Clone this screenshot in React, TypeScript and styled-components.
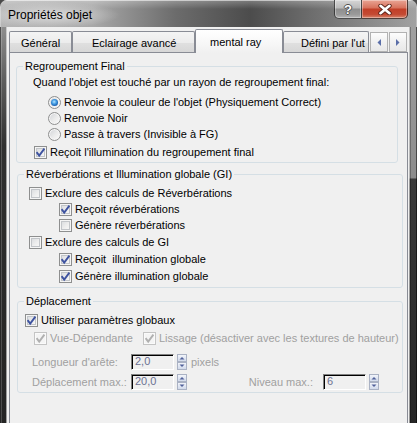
import React from 'react';
import styled, { createGlobalStyle } from 'styled-components';

const GlobalStyle = createGlobalStyle`
  html, body { margin: 0; padding: 0; background: #4a4a4a; }
  body { width: 417px; height: 423px; overflow: hidden; font-family: "Liberation Sans", Arial, sans-serif; }
`;

const Window = styled.div`
  width: 417px;
  height: 423px;
  display: flex;
  flex-direction: column;
  border-radius: 7px 7px 0 0;
  overflow: hidden;
  background: #3a3a3a;
  font-family: "Liberation Sans", Arial, sans-serif;
  font-size: 11px;
  color: #000;
`;

const TitleBar = styled.div`
  height: 27px;
  flex: none;
  display: flex;
  align-items: flex-start;
  padding: 0 9px 0 8px;
  background:
    radial-gradient(ellipse 70px 13px at 50px 15px, rgba(232, 232, 232, 0.8), rgba(232, 232, 232, 0) 100%),
    linear-gradient(180deg, rgba(255, 255, 255, 0.28) 0, rgba(255, 255, 255, 0) 9px),
    linear-gradient(90deg, #b6b6b6 0%, #a9a9a9 22%, #6c6c6c 42%, #4c4c4c 60%, #6e6e6e 75%, #a2a2a2 100%);
  box-shadow: inset 0 1px 0 rgba(255, 255, 255, 0.55), inset 1px 0 0 rgba(255, 255, 255, 0.3),
    inset -1px 0 0 rgba(255, 255, 255, 0.3);
`;

const Title = styled.div`
  margin-top: 7px;
  font-size: 12px;
  line-height: 16px;
  white-space: nowrap;
`;

const CaptionButtons = styled.div`
  display: flex;
  margin-left: auto;
`;

const CaptionButton = styled.div<{ $variant: 'help' | 'close' }>`
  box-sizing: border-box;
  width: ${(p) => (p.$variant === 'close' ? 46 : 28)}px;
  height: 19px;
  display: flex;
  align-items: center;
  justify-content: center;
  border: 1px solid rgba(30, 30, 30, 0.75);
  border-top: none;
  border-left-width: ${(p) => (p.$variant === 'close' ? 0 : 1)}px;
  border-radius: ${(p) => (p.$variant === 'close' ? '0 0 5px 0' : '0 0 0 5px')};
  background: ${(p) =>
    p.$variant === 'close'
      ? 'linear-gradient(180deg, #e9a595 0%, #d8745f 42%, #c23f28 52%, #c44a33 80%, #d7836a 100%)'
      : 'linear-gradient(180deg, #d6d6d6 0%, #bcbcbc 42%, #8f8f8f 52%, #9a9a9a 80%, #b4b4b4 100%)'};
  box-shadow: inset 0 0 0 1px rgba(255, 255, 255, 0.35);
`;

const HelpGlyph = styled.span`
  font-family: "Liberation Sans", Arial, sans-serif;
  font-weight: bold;
  font-size: 13px;
  line-height: 13px;
  color: #fff;
  text-shadow: -1px 0 #505050, 1px 0 #505050, 0 -1px #505050, 0 1px #505050;
`;

const Body = styled.div`
  flex: 1;
  display: flex;
  min-height: 0;
`;

const FrameSide = styled.div<{ $side: 'left' | 'right' }>`
  flex: none;
  width: ${(p) => (p.$side === 'left' ? 7 : 8)}px;
  background: ${(p) =>
    p.$side === 'left'
      ? 'linear-gradient(180deg, #8e8e8e 0%, #5c5c5c 14%, #303030 30%, #242424 100%)'
      : 'linear-gradient(180deg, #a0a0a0 0%, #8c8c8c 38%, #3a3a3a 38.5%, #262626 100%)'};
  box-shadow: ${(p) =>
    p.$side === 'left'
      ? 'inset 1px 0 0 rgba(0,0,0,0.5), inset 2px 0 0 rgba(255,255,255,0.18), inset -1px 0 0 rgba(255,255,255,0.55)'
      : 'inset -1px 0 0 rgba(0,0,0,0.5), inset 1px 0 0 rgba(255,255,255,0.55), inset 2px 0 0 rgba(0,0,0,0.25)'};
`;

const Client = styled.div`
  flex: 1;
  min-width: 0;
  display: flex;
  flex-direction: column;
  background: #f0f0f0;
  padding: 2px 1px 0 2px;
  overflow: hidden;
`;

const TabRow = styled.div`
  flex: none;
  height: 24px;
  display: flex;
  align-items: flex-end;
`;

const TabList = styled.div`
  flex: 1;
  min-width: 0;
  height: 24px;
  display: flex;
  align-items: flex-end;
  overflow: hidden;
`;

const Tab = styled.div<{ $width: number; $pad: number; $active?: boolean }>`
  flex: none;
  box-sizing: border-box;
  width: ${(p) => p.$width}px;
  height: ${(p) => (p.$active ? 24 : 22)}px;
  padding-left: ${(p) => p.$pad}px;
  display: flex;
  align-items: center;
  border: 1px solid #898c95;
  border-bottom: none;
  border-radius: 2px 2px 0 0;
  background: ${(p) =>
    p.$active
      ? 'linear-gradient(180deg, #ffffff 0%, #f7f7f7 60%, #f0f0f0 100%)'
      : 'linear-gradient(180deg, #f4f4f4 0%, #ececec 50%, #e0e0e0 51%, #d6d6d6 100%)'};
  position: ${(p) => (p.$active ? 'relative' : 'static')};
  z-index: ${(p) => (p.$active ? 2 : 'auto')};
  line-height: 14px;
  white-space: nowrap;
`;

const TabScroll = styled.div`
  flex: none;
  display: flex;
  gap: 1px;
  margin: 0 1px 1px 1px;
`;

const ScrollButton = styled.div`
  box-sizing: border-box;
  width: 18px;
  height: 20px;
  display: flex;
  align-items: center;
  justify-content: center;
  border: 1px solid #b2b2b2;
  background: linear-gradient(180deg, #fdfdfd 0%, #f1f1f1 50%, #e8e8e8 100%);
`;

const Panel = styled.div`
  position: relative;
  z-index: 1;
  flex: 1;
  margin: -1px 0 -4px 0;
  border: 1px solid #898c95;
  background: #f0f0f0;
  padding-top: 6px;
  display: flex;
  flex-direction: column;
`;

const Group = styled.fieldset<{ $ml: number; $mr: number; $mt: number; $pb: number }>`
  margin: ${(p) => `${p.$mt}px ${p.$mr}px 0 ${p.$ml}px`};
  padding: 0 0 ${(p) => p.$pb}px 0;
  border: 1px solid #d5dfe5;
  border-radius: 3px;
  min-width: 0;
`;

const Legend = styled.legend`
  margin-left: 6px;
  padding: 0 2px;
  font-size: 11px;
  line-height: 14px;
  white-space: nowrap;
`;

const Row = styled.div<{ $indent: number; $mt?: number; $disabled?: boolean }>`
  display: flex;
  align-items: center;
  height: 16px;
  line-height: 16px;
  padding-left: ${(p) => p.$indent}px;
  margin-top: ${(p) => p.$mt ?? 0}px;
  color: ${(p) => (p.$disabled ? '#a0a0a0' : '#000')};
  white-space: nowrap;
`;

const Option = styled.span<{ $width?: number }>`
  display: inline-flex;
  align-items: center;
  gap: 3px;
  flex: none;
  ${(p) => (p.$width ? `width: ${p.$width}px;` : '')}
`;

const CheckBox = styled.span<{ $disabled?: boolean }>`
  box-sizing: border-box;
  flex: none;
  width: 13px;
  height: 13px;
  display: flex;
  align-items: center;
  justify-content: center;
  border: 1px solid ${(p) => (p.$disabled ? '#c4c4c4' : '#8e8f8f')};
  background: ${(p) =>
    p.$disabled ? '#f4f4f4' : 'linear-gradient(135deg, #d3d6da 0%, #eeeeee 55%, #fbfbfb 100%)'};
  box-shadow: ${(p) =>
    p.$disabled ? 'inset 0 0 0 1px #fafafa' : 'inset 0 0 0 1px #f5f5f5, inset 0 0 0 2px #c2c5c9'};
`;

const RadioCircle = styled.span`
  box-sizing: border-box;
  flex: none;
  width: 13px;
  height: 13px;
  border-radius: 50%;
  display: flex;
  align-items: center;
  justify-content: center;
  border: 1px solid #8e8f8f;
  background: linear-gradient(135deg, #cfd2d6 0%, #ececec 55%, #fbfbfb 100%);
  box-shadow: inset 0 0 0 1px #f6f6f6;
`;

const RadioDot = styled.span`
  width: 7px;
  height: 7px;
  border-radius: 50%;
  background: radial-gradient(circle at 45% 40%, #b8e6ff 0%, #4aa2e6 35%, #1a62b3 70%, #0d3f80 100%);
`;

const FieldLabel = styled.span<{ $width: number; $align?: 'left' | 'right' }>`
  flex: none;
  box-sizing: border-box;
  width: ${(p) => p.$width}px;
  text-align: ${(p) => p.$align ?? 'left'};
  padding-right: ${(p) => (p.$align === 'right' ? 10 : 0)}px;
`;

const SpinEdit = styled.span`
  flex: none;
  box-sizing: border-box;
  width: 43px;
  height: 16px;
  padding-left: 3px;
  line-height: 13px;
  color: #6c7192;
  background: #f0f0f0;
  border: 1px solid;
  border-color: #808080 #ffffff #ffffff #808080;
  box-shadow: inset 1px 1px 0 #000;
`;

const SpinnerBox = styled.span`
  flex: none;
  display: flex;
  margin-left: 3px;
`;

const Unit = styled.span`
  margin-left: 4px;
`;

const Spinner = () => (
  <SpinnerBox>
    <svg width="10" height="16" viewBox="0 0 10 16">
      <defs>
        <linearGradient id="spg" x1="0" y1="0" x2="0" y2="1">
          <stop offset="0" stopColor="#f4f6fb" />
          <stop offset="1" stopColor="#cfd8ea" />
        </linearGradient>
      </defs>
      <rect x="0.5" y="0.5" width="9" height="7" fill="url(#spg)" stroke="#aab2c4" />
      <rect x="0.5" y="8.5" width="9" height="7" fill="url(#spg)" stroke="#aab2c4" />
      <path d="M2.5 5.5 L5 3 L7.5 5.5 Z" fill="#50619a" />
      <path d="M2.5 10.5 L5 13 L7.5 10.5 Z" fill="#50619a" />
    </svg>
  </SpinnerBox>
);

const Check = ({ checked, disabled }: { checked?: boolean; disabled?: boolean }) => (
  <CheckBox $disabled={disabled}>
    {checked && (
      <svg width="11" height="11" viewBox="0 0 11 11">
        <path
          d="M1.6 5.2 L4.2 8.6 L9.4 1.6"
          fill="none"
          stroke={disabled ? '#b0b0b0' : '#3e53a0'}
          strokeWidth="1.9"
        />
      </svg>
    )}
  </CheckBox>
);

const Radio = ({ checked }: { checked?: boolean }) => <RadioCircle>{checked && <RadioDot />}</RadioCircle>;

const CloseIcon = () => (
  <svg width="14" height="11" viewBox="0 0 14 11">
    <path d="M2.5 1.8 L11.5 9.2 M11.5 1.8 L2.5 9.2" stroke="#5b2319" strokeWidth="4.4" strokeLinecap="round" />
    <path d="M2.5 1.8 L11.5 9.2 M11.5 1.8 L2.5 9.2" stroke="#ffffff" strokeWidth="2.6" strokeLinecap="round" />
  </svg>
);

const Arrow = ({ dir }: { dir: 'left' | 'right' }) => (
  <svg width="4" height="7" viewBox="0 0 4 7">
    <path d={dir === 'left' ? 'M4 0 L0.5 3.5 L4 7 Z' : 'M0 0 L3.5 3.5 L0 7 Z'} fill="#5a6ea8" />
  </svg>
);

export default function App() {
  return (
    <>
      <GlobalStyle />
      <Window>
        <TitleBar>
          <Title>Propriétés objet</Title>
          <CaptionButtons>
            <CaptionButton $variant="help">
              <HelpGlyph>?</HelpGlyph>
            </CaptionButton>
            <CaptionButton $variant="close">
              <CloseIcon />
            </CaptionButton>
          </CaptionButtons>
        </TitleBar>
        <Body>
          <FrameSide $side="left" />
          <Client>
            <TabRow>
              <TabList>
                <Tab $width={63} $pad={11}>Général</Tab>
                <Tab $width={123} $pad={19}>Eclairage avancé</Tab>
                <Tab $width={88} $pad={14} $active>
                  mental ray
                </Tab>
                <Tab $width={86} $pad={17}>Défini par l'ut</Tab>
              </TabList>
              <TabScroll>
                <ScrollButton>
                  <Arrow dir="left" />
                </ScrollButton>
                <ScrollButton>
                  <Arrow dir="right" />
                </ScrollButton>
              </TabScroll>
            </TabRow>
            <Panel>
              <Group $ml={6} $mr={9} $mt={0} $pb={2}>
                <Legend>Regroupement Final</Legend>
                <Row $indent={16} $mt={1}>
                  Quand l'objet est touché par un rayon de regroupement final:
                </Row>
                <Row $indent={31} $mt={4}>
                  <Option>
                    <Radio checked />
                    Renvoie la couleur de l'objet (Physiquement Correct)
                  </Option>
                </Row>
                <Row $indent={31}>
                  <Option>
                    <Radio />
                    Renvoie Noir
                  </Option>
                </Row>
                <Row $indent={31}>
                  <Option>
                    <Radio />
                    Passe à travers (Invisible à FG)
                  </Option>
                </Row>
                <Row $indent={17} $mt={2}>
                  <Option>
                    <Check checked />
                    Reçoit l'illumination du regroupement final
                  </Option>
                </Row>
              </Group>

              <Group $ml={7} $mr={4} $mt={4} $pb={3}>
                <Legend>Réverbérations et Illumination globale (GI)</Legend>
                <Row $indent={11} $mt={4}>
                  <Option>
                    <Check />
                    Exclure des calculs de Réverbérations
                  </Option>
                </Row>
                <Row $indent={41}>
                  <Option>
                    <Check checked />
                    Reçoit réverbérations
                  </Option>
                </Row>
                <Row $indent={41}>
                  <Option>
                    <Check />
                    Génère réverbérations
                  </Option>
                </Row>
                <Row $indent={11} $mt={1}>
                  <Option>
                    <Check />
                    Exclure des calculs de GI
                  </Option>
                </Row>
                <Row $indent={41} $mt={1}>
                  <Option>
                    <Check checked />
                    Reçoit&nbsp; illumination globale
                  </Option>
                </Row>
                <Row $indent={41} $mt={1}>
                  <Option>
                    <Check checked />
                    Génère illumination globale
                  </Option>
                </Row>
              </Group>

              <Group $ml={7} $mr={4} $mt={6} $pb={2}>
                <Legend>Déplacement</Legend>
                <Row $indent={7} $mt={4}>
                  <Option>
                    <Check checked />
                    Utiliser paramètres globaux
                  </Option>
                </Row>
                <Row $indent={16} $mt={2} $disabled>
                  <Option $width={109}>
                    <Check checked disabled />
                    Vue-Dépendante
                  </Option>
                  <Option>
                    <Check checked disabled />
                    Lissage (désactiver avec les textures de hauteur)
                  </Option>
                </Row>
                <Row $indent={14} $mt={8} $disabled>
                  <FieldLabel $width={99}>Longueur d'arête:</FieldLabel>
                  <SpinEdit>2,0</SpinEdit>
                  <Spinner />
                  <Unit>pixels</Unit>
                </Row>
                <Row $indent={14} $mt={4} $disabled>
                  <FieldLabel $width={99}>Déplacement max.:</FieldLabel>
                  <SpinEdit>20,0</SpinEdit>
                  <Spinner />
                  <FieldLabel $width={136} $align="right">
                    Niveau max.:
                  </FieldLabel>
                  <SpinEdit>6</SpinEdit>
                  <Spinner />
                </Row>
              </Group>
            </Panel>
          </Client>
          <FrameSide $side="right" />
        </Body>
      </Window>
    </>
  );
}
